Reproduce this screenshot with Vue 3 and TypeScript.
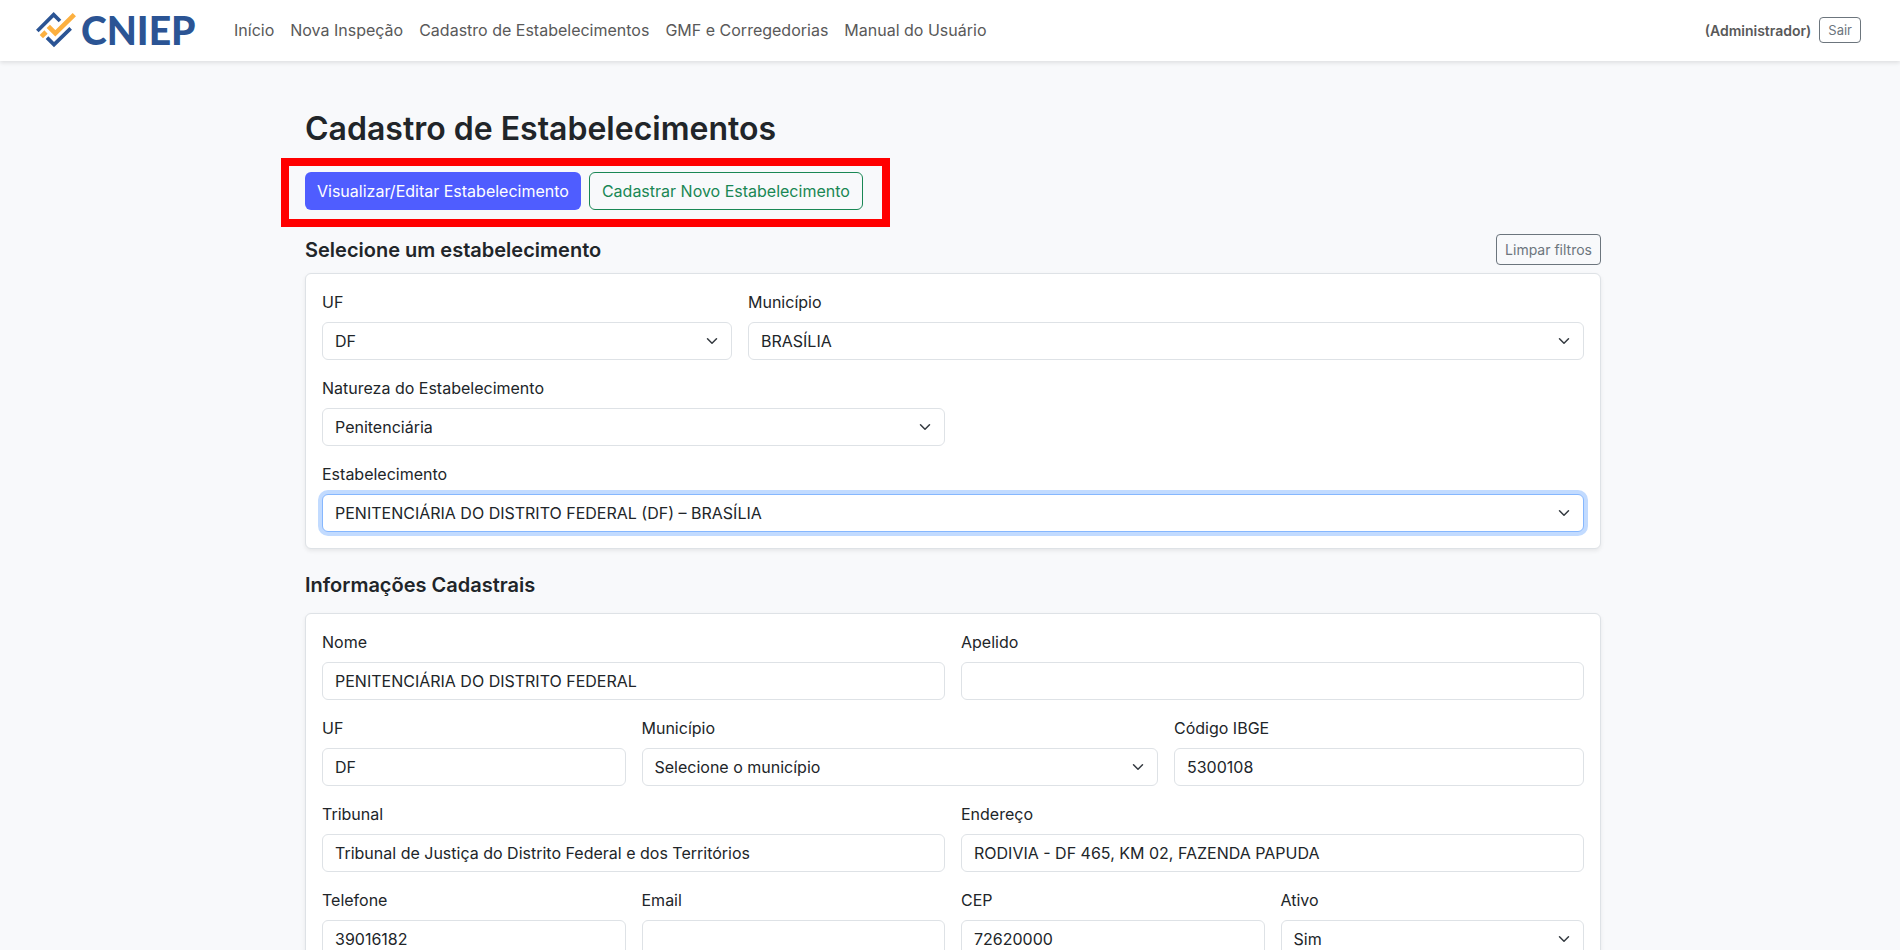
<script setup lang="ts">
import { reactive } from 'vue'

interface Field {
  id: string
  label: string
  span: number
  kind: 'text' | 'select'
  value: string
  options?: string[]
  active?: boolean
}

const links: string[] = [
  'Início',
  'Nova Inspeção',
  'Cadastro de Estabelecimentos',
  'GMF e Corregedorias',
  'Manual do Usuário',
]

const select = (id: string, label: string, span: number, value: string, active = false): Field => ({
  id, label, span, kind: 'select', value, options: [value], active,
})
const text = (id: string, label: string, span: number, value: string): Field => ({
  id, label, span, kind: 'text', value,
})

const filters = reactive<Field[][]>([
  [select('filtro-uf', 'UF', 4, 'DF'), select('filtro-municipio', 'Município', 8, 'BRASÍLIA')],
  [select('filtro-natureza', 'Natureza do Estabelecimento', 6, 'Penitenciária')],
  [select('filtro-estabelecimento', 'Estabelecimento', 12, 'PENITENCIÁRIA DO DISTRITO FEDERAL (DF) – BRASÍLIA', true)],
])

const details = reactive<Field[][]>([
  [text('nome', 'Nome', 6, 'PENITENCIÁRIA DO DISTRITO FEDERAL'), text('apelido', 'Apelido', 6, '')],
  [
    text('uf', 'UF', 3, 'DF'),
    select('municipio', 'Município', 5, 'Selecione o município'),
    text('ibge', 'Código IBGE', 4, '5300108'),
  ],
  [
    text('tribunal', 'Tribunal', 6, 'Tribunal de Justiça do Distrito Federal e dos Territórios'),
    text('endereco', 'Endereço', 6, 'RODIVIA - DF 465, KM 02, FAZENDA PAPUDA'),
  ],
  [
    text('telefone', 'Telefone', 3, '39016182'),
    text('email', 'Email', 3, ''),
    text('cep', 'CEP', 3, '72620000'),
    select('ativo', 'Ativo', 3, 'Sim'),
  ],
])

const sections = [
  { id: 'filtros', title: 'Selecione um estabelecimento', clearable: true, rows: filters },
  { id: 'cadastro', title: 'Informações Cadastrais', clearable: false, rows: details },
]
</script>

<template>
  <div class="page">
    <header class="navbar">
      <a class="brand" href="#">
        <svg class="brand-mark" viewBox="0 0 120 108" aria-hidden="true">
          <g fill="none" stroke-width="11">
            <path d="M4 57 L53 8 L72 27" stroke="#2b5494" />
            <path d="M33 77 L54 98 L104 49" stroke="#2b5494" />
            <path d="M37 43 L58 64 L115 8" stroke="#fcb040" stroke-width="14" />
            <path d="M16 74 L30 60" stroke="#fcb040" stroke-width="14" />
          </g>
        </svg>
        <span>CNIEP</span>
      </a>
      <nav class="links">
        <a v-for="link in links" :key="link" href="#">{{ link }}</a>
      </nav>
      <strong class="role">(Administrador)</strong>
      <button type="button" class="btn btn-gray btn-exit">Sair</button>
    </header>

    <main class="content">
      <h1>Cadastro de Estabelecimentos</h1>
      <div class="actions">
        <button type="button" class="btn btn-primary">Visualizar/Editar Estabelecimento</button>
        <button type="button" class="btn btn-green">Cadastrar Novo Estabelecimento</button>
      </div>

      <section v-for="section in sections" :key="section.id" class="section">
        <div class="section-head" :class="{ compact: section.clearable }">
          <h2>{{ section.title }}</h2>
          <button v-if="section.clearable" type="button" class="btn btn-gray btn-small">Limpar filtros</button>
        </div>
        <form class="card" @submit.prevent>
          <div v-for="(row, index) in section.rows" :key="index" class="row">
            <div v-for="field in row" :key="field.id" class="field" :class="`span-${field.span}`">
              <label :for="field.id">{{ field.label }}</label>
              <div v-if="field.kind === 'select'" class="select-wrap">
                <select :id="field.id" v-model="field.value" class="control" :class="{ active: field.active }">
                  <option v-for="option in field.options" :key="option">{{ option }}</option>
                </select>
                <svg class="chevron" viewBox="0 0 16 16" aria-hidden="true">
                  <path d="m2 5 6 6 6-6" />
                </svg>
              </div>
              <input v-else :id="field.id" v-model="field.value" type="text" class="control" />
            </div>
          </div>
        </form>
      </section>
    </main>
  </div>
</template>

<style>
body {
  margin: 0;
  background: #f8f9fb;
}
</style>

<style scoped>
.page {
  min-height: 100vh;
  box-sizing: border-box;
  overflow: hidden;
  background: #f8f9fb;
  color: #212529;
  font-family: Inter, 'Liberation Sans', sans-serif;
  font-size: 16px;
  line-height: 24px;
}

.page * {
  box-sizing: border-box;
}

.page button,
.page input,
.page select {
  font-family: inherit;
}

.navbar {
  display: flex;
  align-items: center;
  height: 61px;
  padding: 0 39px 2px 36px;
  background: #fff;
  box-shadow: 0 2px 4px rgba(0, 0, 0, 0.1);
}

.brand {
  display: flex;
  align-items: center;
  gap: 5px;
  width: 198px;
  color: #2b5494;
  font: 900 39px/40px Lato, sans-serif;
  text-decoration: none;
}

.brand-mark {
  width: 40px;
  height: 36px;
}

.links {
  display: flex;
  flex: 1;
  gap: 16px;
}

.links a {
  color: #595959;
  text-decoration: none;
}

.role {
  margin-right: 8px;
  padding-top: 2px;
  color: #595959;
  font-size: 14px;
  font-weight: 600;
}

.btn {
  height: 38px;
  padding: 0 12px;
  border: 1px solid;
  border-radius: 6px;
  background: transparent;
  font-size: 16px;
  line-height: 24px;
  cursor: pointer;
}

.btn-primary {
  border: 0;
  background: #4f5dff;
  color: #fff;
}

.btn-green {
  border-color: #198754;
  color: #198754;
}

.btn-gray {
  border-color: #6c757d;
  border-radius: 4px;
  color: #6c757d;
}

.btn-small {
  height: 31px;
  padding: 0 8px;
  font-size: 14px;
}

.btn-exit {
  height: 26px;
  padding: 0 8px;
  font-size: 13px;
  line-height: 18px;
}

.content {
  width: 1302px;
  max-width: calc(100% - 24px);
  margin: 0 auto;
  padding: 48px 0 0 6px;
}

h1 {
  margin: 0 0 24px;
  font-size: 32px;
  font-weight: 600;
  line-height: 39px;
}

.actions {
  position: relative;
  display: flex;
  gap: 8px;
  width: fit-content;
  margin-bottom: 24px;
}

.actions::after {
  position: absolute;
  inset: -14px -27px -17px -24px;
  border: 8px solid #f00;
  content: '';
  pointer-events: none;
}

.section {
  margin-bottom: 24px;
}

.section-head {
  display: flex;
  align-items: center;
  justify-content: space-between;
  margin-bottom: 16px;
}

.section-head.compact {
  margin-bottom: 8px;
}

h2 {
  margin: 0;
  font-size: 20px;
  font-weight: 600;
  line-height: 24px;
}

.card {
  display: grid;
  gap: 16px;
  padding: 16px;
  border: 1px solid #dee2e6;
  border-radius: 6px;
  background: #fff;
  box-shadow: 0 2px 4px rgba(0, 0, 0, 0.075);
}

.row {
  display: grid;
  grid-template-columns: repeat(12, minmax(0, 1fr));
  gap: 16px;
}

.field {
  display: flex;
  flex-direction: column;
  gap: 8px;
}

.span-3 { grid-column: span 3; }
.span-4 { grid-column: span 4; }
.span-5 { grid-column: span 5; }
.span-6 { grid-column: span 6; }
.span-8 { grid-column: span 8; }
.span-12 { grid-column: span 12; }

.control {
  width: 100%;
  height: 38px;
  padding: 6px 12px;
  border: 1px solid #dee2e6;
  border-radius: 6px;
  background: #fff;
  color: #212529;
  font-size: 16px;
  line-height: 24px;
  outline: 0;
  appearance: none;
}

.control.active,
.control:focus {
  border-color: #86b7fe;
  box-shadow: 0 0 0 4px #c2dbff;
}

.select-wrap {
  display: grid;
  align-items: center;
}

.select-wrap > * {
  grid-area: 1 / 1;
}

.chevron {
  justify-self: end;
  width: 16px;
  height: 12px;
  margin-right: 12px;
  fill: none;
  stroke: #343a40;
  stroke-width: 2;
  stroke-linecap: round;
  stroke-linejoin: round;
  pointer-events: none;
}
</style>
